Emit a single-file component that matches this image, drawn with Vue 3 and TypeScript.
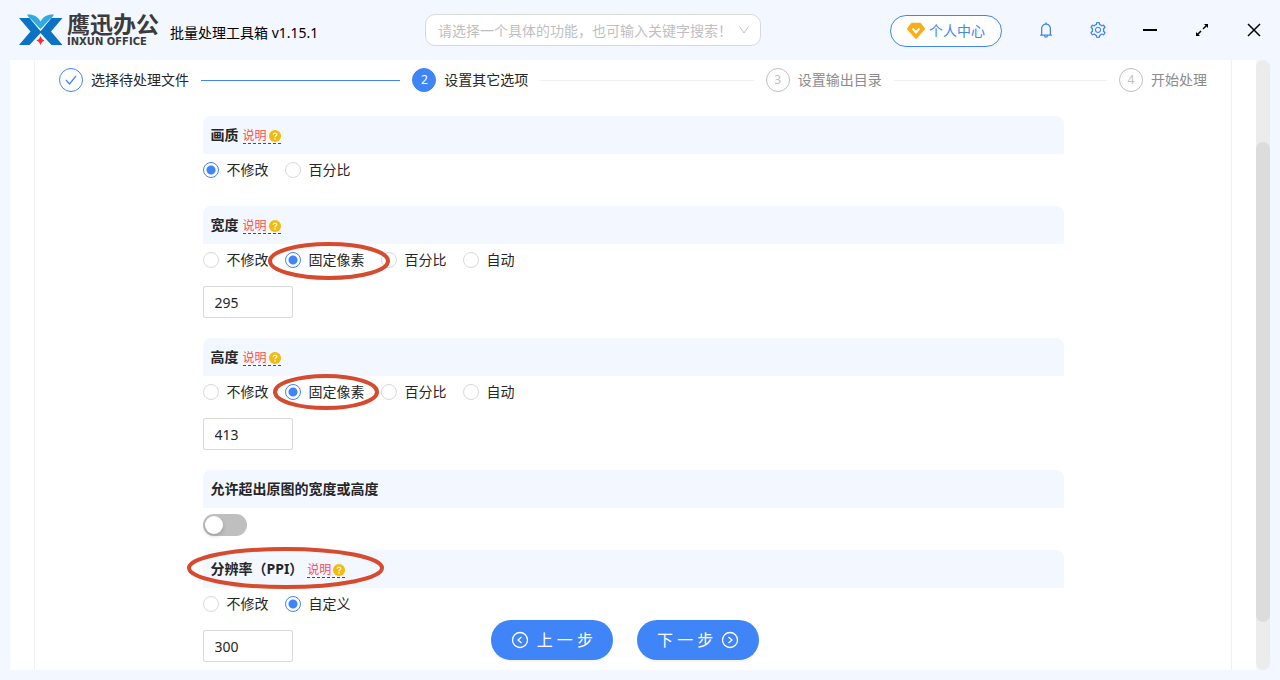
<script setup lang="ts">
import { ref } from 'vue'

interface Mark { name: string; w: number; h: number }
interface Section {
  id: string
  title: string
  help: boolean
  options: string[]
  selected: string
  amount: string | null
  toggle?: boolean
  mark?: Mark
}

const steps = [
  { n: 1, label: '选择待处理文件', state: 'done' },
  { n: 2, label: '设置其它选项', state: 'active' },
  { n: 3, label: '设置输出目录', state: 'wait' },
  { n: 4, label: '开始处理', state: 'wait' },
]

const sections = ref<Section[]>([
  { id: 'quality', title: '画质', help: true, options: ['不修改', '百分比'], selected: '不修改', amount: null },
  { id: 'width', title: '宽度', help: true, options: ['不修改', '固定像素', '百分比', '自动'], selected: '固定像素', amount: '295', mark: { name: 'mark-width', w: 122, h: 38 } },
  { id: 'height', title: '高度', help: true, options: ['不修改', '固定像素', '百分比', '自动'], selected: '固定像素', amount: '413', mark: { name: 'mark-height', w: 106, h: 36 } },
  { id: 'exceed', title: '允许超出原图的宽度或高度', help: false, options: [], selected: '', amount: null, toggle: true },
  { id: 'ppi', title: '分辨率（PPI）', help: true, options: ['不修改', '自定义'], selected: '自定义', amount: '300', mark: { name: 'mark-ppi', w: 197, h: 42 } },
])

const exceed = ref(false)
const keyword = ref('')
</script>

<template>
  <div class="window">
    <header class="topbar">
      <div class="brand">
        <svg class="logo" width="44" height="32" viewBox="0 0 44 32" aria-hidden="true">
          <path d="M0 4H10.500L20 15.500L21.500 17L23 15.500L32.500 4H43.500L32 17.500L43.500 31H32.500L21.500 19L10.500 31H0L11.500 17.500Z" fill="#0b72c4" />
          <path d="M8 .5C14 0 19 2.500 21.500 7.500C24 2.500 29 0 35 .5C33.500 3 32.500 4 30.500 5.500L21.500 15L12.500 5.500C10.500 4 9.500 3 8 .5Z" fill="#31a9e1" />
          <path d="M21.500 22L23 25L25.500 26.500L23 28L21.500 31L20 28L17.500 26.500L20 25Z" fill="#ff2b2b" />
        </svg>
        <div class="wordmark">
          <span class="word-cn">鹰迅办公</span>
          <span class="word-en">INXUN OFFICE</span>
        </div>
        <span class="version">批量处理工具箱 v1.15.1</span>
      </div>

      <div class="search">
        <input v-model="keyword" type="text" aria-label="搜索功能" placeholder="请选择一个具体的功能，也可输入关键字搜索！" />
        <svg class="chevron" width="12" height="12" viewBox="0 0 12 12" aria-hidden="true">
          <path d="M1.500 2.500L6 9L10.500 2.500" fill="none" stroke="#bfbfbf" />
        </svg>
      </div>

      <div class="actions">
        <button type="button" class="account">
          <svg width="18" height="18" viewBox="0 0 18 18" aria-hidden="true">
            <path d="M4.500 1H13.500L18 7L9 17L0 7Z" fill="#faad14" stroke="#faad14" stroke-linejoin="round" stroke-width=".5" />
            <path d="M5.500 6.500L9 10.500L12.500 6.500" fill="none" stroke="#fff" stroke-width="2" />
          </svg>
          <span>个人中心</span>
        </button>
        <button type="button" class="tool blue" aria-label="通知">
          <svg width="16" height="16" viewBox="64 64 896 896" fill="currentColor">
            <path d="M816 768h-24V428c0-141.1-104.3-257.8-240-277.2V112c0-22.1-17.9-40-40-40s-40 17.9-40 40v38.800C336.300 170.200 232 286.900 232 428v340h-24c-17.700 0-32 14.300-32 32v32c0 4.400 3.600 8 8 8h216c0 61.800 50.200 112 112 112s112-50.200 112-112h216c4.400 0 8-3.600 8-8v-32c0-17.700-14.300-32-32-32zM512 888c-26.500 0-48-21.500-48-48h96c0 26.500-21.500 48-48 48zM304 768V428c0-55.600 21.600-107.800 60.900-147.100S456.400 220 512 220c55.600 0 107.800 21.600 147.100 60.900S720 372.400 720 428v340H304z" />
          </svg>
        </button>
        <button type="button" class="tool blue" aria-label="设置">
          <svg width="16" height="16" viewBox="64 64 896 896" fill="currentColor">
            <path d="M924.8 625.7l-65.5-56c3.1-19 4.7-38.4 4.7-57.8s-1.6-38.8-4.7-57.8l65.5-56a32.03 32.03 0 009.3-35.2l-.9-2.6a443.74 443.74 0 00-79.7-137.9l-1.8-2.1a32.12 32.12 0 00-35.1-9.5l-81.3 28.9c-30-24.6-63.5-44-99.7-57.6l-15.7-85a32.05 32.05 0 00-25.8-25.7l-2.7-.5c-52.1-9.4-106.9-9.4-159 0l-2.7.5a32.05 32.05 0 00-25.8 25.7l-15.8 85.4a351.86 351.86 0 00-99 57.4l-81.9-29.1a32 32 0 00-35.1 9.5l-1.8 2.1a446.02 446.02 0 00-79.7 137.9l-.9 2.6c-4.5 12.5-.8 26.5 9.3 35.2l66.3 56.6c-3.1 18.8-4.6 38-4.6 57.1 0 19.2 1.5 38.4 4.6 57.1L99 625.5a32.03 32.03 0 00-9.3 35.2l.9 2.6c18.1 50.4 44.9 96.9 79.7 137.9l1.8 2.1a32.12 32.12 0 0035.1 9.5l81.9-29.1c29.8 24.5 63.1 43.9 99 57.4l15.8 85.4a32.05 32.05 0 0025.8 25.7l2.7.5a449.4 449.4 0 00159 0l2.7-.5a32.05 32.05 0 0025.8-25.7l15.7-85a350 350 0 0099.7-57.6l81.3 28.9a32 32 0 0035.1-9.5l1.8-2.1c34.8-41.1 61.6-87.5 79.7-137.9l.9-2.6c4.5-12.3.8-26.3-9.3-35zM788.3 465.9c2.5 15.1 3.8 30.6 3.8 46.1s-1.3 31-3.8 46.1l-6.6 40.1 74.7 63.9a370.03 370.03 0 01-42.6 73.6L721 702.8l-31.4 25.8c-23.9 19.6-50.5 35-79.3 45.8l-38.1 14.3-17.9 97a377.5 377.5 0 01-85 0l-17.9-97.2-37.8-14.5c-28.5-10.8-55-26.2-78.7-45.7l-31.4-25.9-93.4 33.2c-17-22.9-31.2-47.6-42.6-73.6l75.5-64.5-6.5-40c-2.4-14.9-3.7-30.3-3.7-45.5 0-15.3 1.2-30.6 3.7-45.5l6.5-40-75.5-64.5c11.3-26.1 25.6-50.7 42.6-73.6l93.4 33.2 31.4-25.9c23.7-19.5 50.2-34.9 78.7-45.7l37.9-14.3 17.9-97.2c28.1-3.2 56.8-3.2 85 0l17.9 97 38.1 14.3c28.7 10.8 55.4 26.2 79.3 45.8l31.4 25.8 92.8-32.9c17 22.9 31.2 47.6 42.6 73.6L781.8 426l6.5 39.9zM512 326c-97.2 0-176 78.8-176 176s78.8 176 176 176 176-78.8 176-176-78.8-176-176-176zm79.2 255.2A111.6 111.6 0 01512 614c-29.900 0-58-11.700-79.200-32.800A111.600 111.600 0 01400 502c0-29.900 11.700-58 32.800-79.200C454 401.600 482.100 390 512 390c29.900 0 58 11.600 79.200 32.800A111.600 111.600 0 01624 502c0 29.900-11.700 58-32.800 79.200z" />
          </svg>
        </button>
        <button type="button" class="tool" aria-label="最小化">
          <svg width="16" height="16" viewBox="0 0 16 16"><path d="M1 8H15" stroke="currentColor" stroke-width="2" /></svg>
        </button>
        <button type="button" class="tool" aria-label="最大化">
          <svg width="16" height="16" viewBox="0 0 16 16" fill="currentColor">
            <path d="M14 2V6L10 2ZM2 14V10L6 14Z" />
            <path d="M12.500 3.500L9 7M7 9L3.500 12.500" stroke="currentColor" stroke-width="1.500" />
          </svg>
        </button>
        <button type="button" class="tool" aria-label="关闭">
          <svg width="16" height="16" viewBox="0 0 16 16"><path d="M2 2L14 14M14 2L2 14" stroke="currentColor" stroke-width="1.500" /></svg>
        </button>
      </div>
    </header>

    <main class="body">
      <div class="viewport">
        <div class="card">
          <ol class="steps">
            <li v-for="s in steps" :key="s.n" class="step" :class="s.state">
              <span class="badge">
                <svg v-if="s.state === 'done'" width="12" height="12" viewBox="0 0 12 12" aria-label="已完成">
                  <path d="M1 6L4.500 10L11 2" fill="none" stroke="currentColor" stroke-width="1.200" />
                </svg>
                <template v-else>{{ s.n }}</template>
              </span>
              <span class="step-label">{{ s.label }}</span>
            </li>
          </ol>

          <form class="form" @submit.prevent>
            <section v-for="sec in sections" :key="sec.id" class="section">
              <h2 class="title">
                <span :id="sec.id + '-title'">{{ sec.title }}</span>
                <a v-if="sec.help" href="#" class="help">
                  <span>说明</span>
                  <svg width="12" height="12" viewBox="0 0 12 12" aria-hidden="true">
                    <circle cx="6" cy="6" r="6" fill="#f5b90a" />
                    <path d="M4.200 4.800C4.200 2.500 7.800 2.500 7.800 4.600C7.800 5.900 6 5.700 6 7.200" fill="none" stroke="#fff" stroke-width="1.300" />
                    <circle cx="6" cy="8.900" r=".8" fill="#fff" />
                  </svg>
                </a>
              </h2>
              <div v-if="sec.options.length" class="options" role="radiogroup" :aria-labelledby="sec.id + '-title'">
                <label v-for="o in sec.options" :key="o" class="option">
                  <input v-model="sec.selected" type="radio" :name="sec.id" :value="o" />
                  <span>{{ o }}</span>
                </label>
              </div>
              <input v-if="sec.amount !== null" v-model="sec.amount" type="text" class="amount" :aria-labelledby="sec.id + '-title'" />
              <div v-if="sec.toggle" class="toggle-row">
                <input v-model="exceed" type="checkbox" role="switch" class="switch" :aria-labelledby="sec.id + '-title'" />
              </div>
              <svg v-if="sec.mark" class="mark" :class="sec.mark.name" :width="sec.mark.w" :height="sec.mark.h" aria-hidden="true">
                <ellipse cx="50%" cy="50%" :rx="sec.mark.w / 2 - 2" :ry="sec.mark.h / 2 - 2" fill="none" stroke="#d64a2e" stroke-width="4" />
              </svg>
            </section>
          </form>
        </div>
        <div class="nav">
          <button type="button" class="primary">
            <svg width="18" height="18" viewBox="0 0 18 18" fill="none" stroke="currentColor" aria-hidden="true">
              <circle cx="9" cy="9" r="7.500" stroke-width="1.300" /><path d="M10.500 6L7 9L10.500 12" stroke-width="1.300" />
            </svg>
            <span>上 一 步</span>
          </button>
          <button type="button" class="primary">
            <span>下 一 步</span>
            <svg width="18" height="18" viewBox="0 0 18 18" fill="none" stroke="currentColor" aria-hidden="true">
              <circle cx="9" cy="9" r="7.500" stroke-width="1.300" /><path d="M7.500 6L11 9L7.500 12" stroke-width="1.300" />
            </svg>
          </button>
        </div>
      </div>
      <div class="scrollbar" aria-hidden="true">
        <div class="before"></div>
        <div class="thumb"></div>
        <div class="after"></div>
      </div>
    </main>
  </div>
</template>

<style>
body {
  margin: 0;
  background: #f3f7ff;
}
</style>

<style scoped>
.window {
  display: flex;
  flex-direction: column;
  height: 100vh;
  box-sizing: border-box;
  padding-bottom: 10px;
  overflow: hidden;
  background: #f3f7ff;
  color: #262626;
  font-family: "Noto Sans", "Noto Sans CJK SC", sans-serif;
  font-size: 14px;
  line-height: 22px;
}
button,
input {
  font: inherit;
  margin: 0;
  box-sizing: border-box;
}
button {
  padding: 0;
  border: 0;
  background: none;
  cursor: pointer;
  white-space: nowrap;
}
svg {
  display: block;
  flex: none;
}

.topbar {
  display: grid;
  grid-template-columns: 425px minmax(0, 336px) 1fr;
  align-items: center;
  height: 60px;
  flex: none;
}
.brand {
  display: flex;
  align-items: center;
  padding-left: 19px;
  color: #000;
  white-space: nowrap;
}
.wordmark {
  display: flex;
  flex-direction: column;
  width: 92px;
  margin: 0 11px 0 4px;
  font-weight: 700;
  color: #3b3b3d;
}
.word-cn {
  font-size: 23px;
  line-height: 24px;
}
.word-en {
  font-family: "DejaVu Sans", sans-serif;
  font-size: 10px;
  line-height: 12px;
}
.version {
  padding-top: 5px;
}
.search {
  position: relative;
}
.search input {
  display: block;
  width: 100%;
  height: 32px;
  padding: 0 30px 0 12px;
  border: 1px solid #d9d9d9;
  border-radius: 10px;
  background: #fff;
  outline: none;
}
.search input::placeholder {
  color: #bfbfbf;
  opacity: 1;
}
.chevron {
  position: absolute;
  top: 10px;
  right: 11px;
}
.actions {
  display: flex;
  align-items: center;
  justify-content: flex-end;
}
.account {
  display: flex;
  align-items: center;
  gap: 4px;
  height: 32px;
  margin: 2px 18px 0 0;
  padding: 0 16px;
  border: 1px solid #3f85f8;
  border-radius: 16px;
  background: #fff;
  color: #3f85f8;
}
.tool {
  display: grid;
  place-items: center;
  width: 52px;
  height: 32px;
  color: #000;
}
.tool.blue {
  color: #3f85f8;
}

.body {
  display: flex;
  flex: 1;
  min-height: 0;
  margin: 0 10px;
}
.viewport {
  position: relative;
  flex: 1;
  min-width: 0;
  overflow: hidden;
  padding: 0 24px;
  background: #fff;
}
.card {
  min-height: 100%;
  box-sizing: border-box;
  padding: 8px 24px 0;
  border: solid #f0f0f0;
  border-width: 0 1px;
}
.steps {
  display: flex;
  margin: 0;
  padding: 0;
  list-style: none;
}
.step {
  display: flex;
  flex: 1;
  align-items: center;
  color: #8c8c8c;
  white-space: nowrap;
}
.step:last-child {
  flex: none;
}
.step:not(:last-child)::after {
  content: "";
  flex: 1;
  height: 1px;
  margin: 0 12px;
  background: #f0f0f0;
}
.step.done::after {
  background: #3f85f8;
}
.step.done,
.step.active {
  color: #262626;
}
.badge {
  display: grid;
  place-items: center;
  width: 24px;
  height: 24px;
  box-sizing: border-box;
  margin-right: 8px;
  border: 1px solid #bfbfbf;
  border-radius: 50%;
  color: #bfbfbf;
  font-size: 12px;
}
.done .badge {
  border-color: #3f85f8;
  color: #3f85f8;
}
.active .badge {
  border-color: #3f85f8;
  background: #3f85f8;
  color: #fff;
}

.form {
  width: 75%;
  margin: 24px auto 0;
}
.section {
  position: relative;
  margin-bottom: 20px;
}
.title {
  display: flex;
  align-items: center;
  gap: 4px;
  height: 38px;
  margin: 0;
  padding: 0 8px;
  border-radius: 8px 8px 0 0;
  background: #f3f7ff;
  font-size: 14px;
  font-weight: 700;
}
.help {
  display: flex;
  align-items: center;
  gap: 2px;
  padding-top: 2px;
  border-bottom: 1px dashed #f00;
  color: #ff4d4f;
  font-size: 12px;
  font-weight: 400;
  line-height: 14px;
  text-decoration: none;
}
.options {
  display: flex;
  align-items: center;
  gap: 16px;
  height: 32px;
}
.option {
  display: flex;
  align-items: center;
  gap: 8px;
}
.option input {
  appearance: none;
  width: 16px;
  height: 16px;
  border: 1px solid #d9d9d9;
  border-radius: 50%;
  background: #fff;
}
.option input:checked {
  border-color: #3f85f8;
  background: radial-gradient(circle, #3f85f8 4px, #fff 5px);
}
.amount {
  display: block;
  width: 90px;
  height: 32px;
  margin-top: 10px;
  padding: 0 11px;
  border: 1px solid #d9d9d9;
  border-radius: 2px;
  background: #fff;
  color: #262626;
  outline: none;
}
.toggle-row {
  padding-top: 6px;
}
.section:has(.toggle-row) {
  margin-bottom: 14px;
}
.switch {
  display: block;
  appearance: none;
  width: 44px;
  height: 22px;
  padding: 2px;
  border-radius: 11px;
  background: #bfbfbf;
}
.switch::before {
  content: "";
  display: block;
  width: 18px;
  height: 18px;
  border-radius: 50%;
  background: #fff;
  box-shadow: 0 2px 4px rgba(0, 35, 11, 0.2);
}
.switch:checked {
  background: #3f85f8;
}
.switch:checked::before {
  margin-left: auto;
}

/* Red annotation rings lie over the form. */
.mark {
  position: absolute;
  pointer-events: none;
}
.mark-width {
  left: 65px;
  top: 36px;
}
.mark-height {
  left: 70px;
  top: 36px;
}
.mark-ppi {
  left: -16px;
  top: -3px;
}

/* Floating step navigation over the scrolled form. */
.nav {
  position: absolute;
  right: 16px;
  bottom: 10px;
  left: 0;
  display: flex;
  justify-content: center;
  gap: 24px;
  pointer-events: none;
}
.primary {
  display: flex;
  align-items: center;
  gap: 8px;
  height: 40px;
  padding: 0 20px;
  border-radius: 20px;
  background: #3f85f8;
  box-shadow: 0 2px 0 rgba(0, 0, 0, 0.04);
  color: #fff;
  font-size: 16px;
  pointer-events: auto;
}

.scrollbar {
  display: flex;
  flex-direction: column;
  width: 14px;
  flex: none;
  border-radius: 7px;
  background: #ececec;
}
.before {
  flex: 82;
}
.thumb {
  flex: 480;
  border-radius: 7px;
  background: #dcdcdc;
}
.after {
  flex: 48;
}
</style>
